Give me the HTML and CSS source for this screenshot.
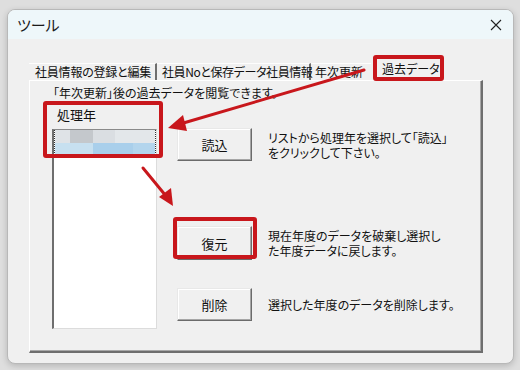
FILE: index.html
```html
<!DOCTYPE html>
<html lang="ja">
<head>
    <meta charset="UTF-8">
    <title>ツール</title>
    <link rel="stylesheet" href="styles.css">
</head>
<body>
    <div class="window">
        <div class="titlebar">
            <span class="title">ツール</span>
            <svg class="close" width="12" height="12" viewBox="0 0 12 12">
                <path d="M1 1L11 11M11 1L1 11" stroke="#222" stroke-width="1.1" fill="none"/>
            </svg>
        </div>
        <div class="content">
            <div class="tabs">
                <div class="tab tab1">社員情報の登録と編集</div>
                <div class="tab tab2">社員Noと保存データ社員情報</div>
                <div class="tab tab3">年次更新</div>
                <div class="tab active">過去データ</div>
            </div>
            <div class="panel">
                <div class="note">「年次更新」後の過去データを閲覧できます。</div>
                <div class="main">
                    <div class="left">
                        <div class="label">処理年</div>
                        <div class="listbox">
                            <div class="sel">
                                <div class="sel-top"></div>
                                <div class="sel-bottom"></div>
                            </div>
                        </div>
                    </div>
                    <div class="right">
                        <div class="row row1">
                            <button class="btn">読込</button>
                            <div class="desc"><div>リストから処理年を選択して「読込」</div><div>をクリックして下さい。</div></div>
                        </div>
                        <div class="row row2">
                            <button class="btn">復元</button>
                            <div class="desc"><div>現在年度のデータを破棄し選択し</div><div>た年度データに戻します。</div></div>
                        </div>
                        <div class="row row3">
                            <button class="btn">削除</button>
                            <div class="desc">選択した年度のデータを削除します。</div>
                        </div>
                    </div>
                </div>
            </div>
        </div>
    </div>

    <!-- 注釈（赤枠と矢印） -->
    <svg class="marks" width="520" height="370" viewBox="0 0 520 370">
        <g fill="none" stroke="#c8171c" stroke-width="4">
            <rect x="45" y="103" width="116" height="53" rx="1"/>
            <rect x="375" y="57" width="67" height="22" rx="1"/>
            <rect x="175" y="219" width="80" height="38" rx="1"/>
        </g>
        <g stroke="#c8171c" stroke-width="3" stroke-linecap="round">
            <line x1="364" y1="70" x2="180" y2="124"/>
            <line x1="143" y1="168" x2="166" y2="196"/>
        </g>
        <g fill="#c8171c">
            <polygon points="168,128 183,115 187,131"/>
            <polygon points="173,206 159,197 171,188"/>
        </g>
    </svg>
</body>
</html>
```

FILE: styles.css
```css
* {
    box-sizing: border-box;
}

html, body {
    margin: 0;
    padding: 0;
}

body {
    width: 520px;
    height: 370px;
    background: #dedede;
    font-family: "Noto Sans CJK JP", "Noto Sans", sans-serif;
    font-size: 12px;
    font-feature-settings: "palt";
    color: #111;
    padding: 9px 6px 0 7px;
    position: relative;
}

.window {
    width: 507px;
    height: 355px;
    border: 1px solid #b8b8b8;
    border-radius: 8px;
    background: #f0f0f0;
    box-shadow: 0 2px 6px rgba(0, 0, 0, 0.18);
    overflow: hidden;
    display: flex;
    flex-direction: column;
}

.titlebar {
    height: 29px;
    flex: none;
    background: #eef7fa;
    display: flex;
    align-items: center;
    justify-content: space-between;
    padding: 0 11px 0 9px;
}

.title {
    font-size: 15px;
    color: #1a1a1a;
}

.close {
    display: block;
}

.content {
    flex: 1;
    padding: 19px 30px 10px 21px;
    display: flex;
    flex-direction: column;
}

.tabs {
    display: flex;
    align-items: flex-end;
    height: 22px;
    flex: none;
}

.tab {
    height: 17px;
    line-height: 16px;
    white-space: nowrap;
    padding-left: 6px;
    border-right: 2px solid #6e6e6e;
    border-top: 1px solid #fdfdfd;
}

.tab1 {
    width: 128px;
    letter-spacing: -0.2px;
}

.tab2 {
    width: 154px;
    padding-left: 5px;
    letter-spacing: -0.4px;
}

.tab3 {
    width: 60px;
    padding-left: 4px;
    border-right: none;
}

.tab.active {
    height: 22px;
    line-height: 20px;
    width: 66px;
    margin-left: 5px;
    padding-left: 5px;
    border-top: 1px solid #fff;
    border-left: 1px solid #fff;
    border-right: 1px solid #6e6e6e;
    background: #f0f0f0;
}

.panel {
    flex: 1;
    border-top: 1px solid #fff;
    border-left: 1px solid #fff;
    border-right: 2px solid #6e6e6e;
    border-bottom: 2px solid #6e6e6e;
    box-shadow: inset -1px -1px 0 #a8a8a8;
    display: flex;
    flex-direction: column;
}

.note {
    margin: 5px 0 0 23px;
    line-height: 14px;
    height: 14px;
}

.main {
    display: flex;
}

.left {
    margin-left: 22px;
    width: 105px;
}

.label {
    margin: 7px 0 0 5px;
    line-height: 16px;
    height: 16px;
    font-size: 13px;
}

.listbox {
    margin-top: 6px;
    height: 200px;
    background: #fff;
    border-top: 1px solid #8a8a8a;
    border-left: 2px solid #6e6e6e;
    border-right: 1px solid #dcdcdc;
    border-bottom: 1px solid #dcdcdc;
}

.sel {
    height: 27px;
    border-left: 1px dotted #333;
    border-right: 1px dotted #333;
}

.sel-top {
    height: 13px;
    background: linear-gradient(to right,
        #dfe3e7 0, #dfe3e7 15px,
        #c4c8cc 15px, #c4c8cc 38px,
        #dadee2 38px, #dadee2 60px,
        #e3e7ea 60px);
}

.sel-bottom {
    height: 14px;
    background: linear-gradient(to right,
        #c7e0f0 0, #c7e0f0 38px,
        #a9cfeb 38px, #a9cfeb 78px,
        #b3d5ed 78px);
}

.right {
    margin-left: 20px;
    display: flex;
    flex-direction: column;
}

.row {
    display: flex;
    align-items: center;
}

.row1 {
    margin-top: 28px;
}

.row2 {
    margin-top: 65px;
}

.row3 {
    margin-top: 28px;
}

.btn {
    width: 75px;
    height: 33px;
    font-family: inherit;
    font-size: 13px;
    color: #111;
    background: #f0f0f0;
    border: 1px solid;
    border-color: #e8e8e8 #6b6b6b #6b6b6b #e8e8e8;
    box-shadow: inset -1px -1px 0 #a6a6a6, inset 1px 1px 0 #fff;
    padding: 0;
    flex: none;
}

.row2 .btn {
    height: 34px;
}

.desc {
    margin-left: 16px;
    line-height: 15px;
    white-space: nowrap;
}

.marks {
    position: absolute;
    left: 0;
    top: 0;
    pointer-events: none;
}
```
